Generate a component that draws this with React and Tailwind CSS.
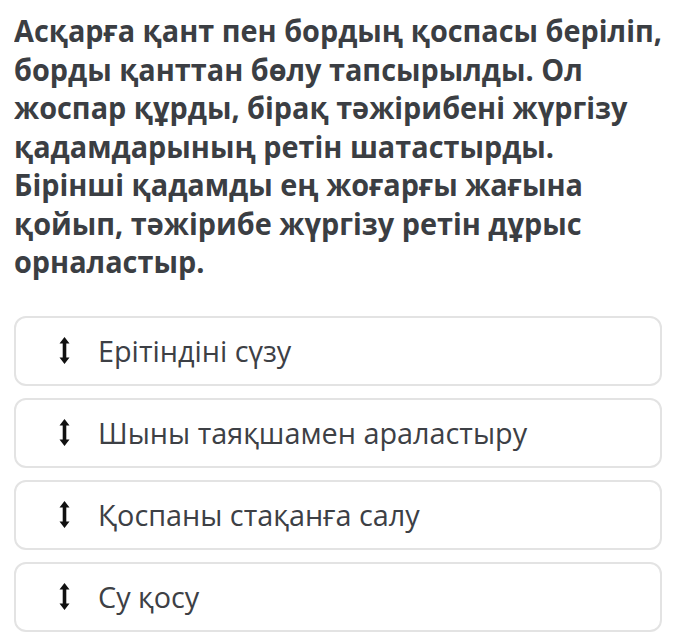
import React from "react";

const items = [
  "Ерітіндіні сүзу",
  "Шыны таяқшамен араластыру",
  "Қоспаны стақанға салу",
  "Су қосу",
];

const lines = [
  "Асқарға қант пен бордың қоспасы беріліп,",
  "борды қанттан бөлу тапсырылды. Ол",
  "жоспар құрды, бірақ тәжірибені жүргізу",
  "қадамдарының ретін шатастырды.",
  "Бірінші қадамды ең жоғарғы жағына",
  "қойып, тәжірибе жүргізу ретін дұрыс",
  "орналастыр.",
];

function Arrow() {
  return (
    <svg width="11" height="27" viewBox="0 0 11 27" className="shrink-0">
      <path d="M5.5 0 L10.5 6.5 L7.3 6.5 L7.3 20.5 L10.5 20.5 L5.5 27 L0.5 20.5 L3.7 20.5 L3.7 6.5 L0.5 6.5 Z" fill="#111" />
    </svg>
  );
}

export default function App() {
  return (
    <div className="w-[686px] h-[642px] bg-white px-[14px] pt-[11px] overflow-hidden" style={{ fontFamily: '"Open Sans", sans-serif' }}>
      <p className="text-[31px] leading-[38.5px] font-bold text-[#3b3e43] whitespace-nowrap origin-left scale-x-[0.93]">
        {lines.map((l, i) => (
          <React.Fragment key={i}>
            {l}
            {i < lines.length - 1 && <br />}
          </React.Fragment>
        ))}
      </p>
      <div className="mt-[35px] flex flex-col gap-[12px] w-[648px]">
        {items.map((t) => (
          <div key={t} className="h-[70px] rounded-[12px] border-2 border-[#e3e3e3] flex items-center pl-[43px] gap-[28px]">
            <Arrow />
            <span className="text-[28.8px] text-[#3d4045]">{t}</span>
          </div>
        ))}
      </div>
    </div>
  );
}
